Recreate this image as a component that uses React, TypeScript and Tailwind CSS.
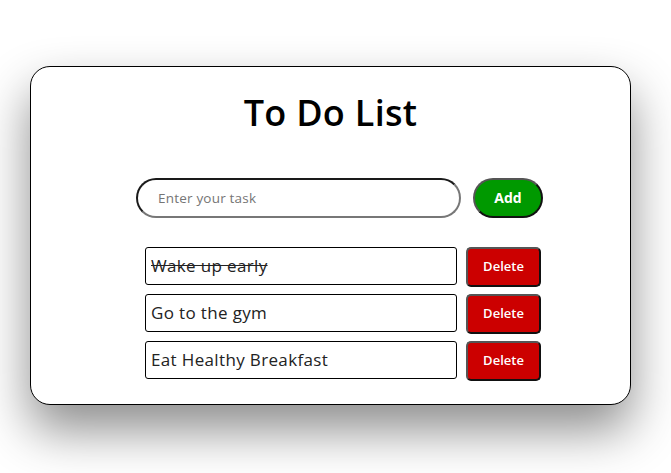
import React from "react";

const tasks = [
  { text: "Wake up early", done: true },
  { text: "Go to the gym", done: false },
  { text: "Eat Healthy Breakfast", done: false },
];

export default function App() {
  return (
    <div className="min-h-[473px] bg-white pt-[66px] pl-[30px] font-['Open_Sans',sans-serif]">
      <div className="w-[601px] h-[339px] rounded-[20px] border border-black bg-white shadow-[0_25px_50px_rgba(0,0,0,0.45)]">
        <h1 className="mt-[22px] text-center text-[36px] leading-[48px] font-semibold tracking-[0.3px] text-black">
          To Do List
        </h1>

        <div className="mt-[41px] ml-[105px] flex items-center gap-[12px]">
          <input
            type="text"
            placeholder="Enter your task"
            className="h-[40px] w-[325px] rounded-full border-2 border-t-[#1a1a1a] border-l-[#1a1a1a] border-b-[#777] border-r-[#777] bg-white pl-[20px] text-[13.5px] tracking-[0.2px] text-black outline-none placeholder:text-[#757575]"
          />
          <button className="-mt-[1px] h-[40px] w-[70px] rounded-full border-2 border-t-[#555] border-l-[#555] border-b-[#111] border-r-[#111] bg-[#009900] text-[14px] font-bold text-white">
            Add
          </button>
        </div>

        <ul className="mt-[29px] ml-[114px] flex flex-col gap-[7px]">
          {tasks.map((task, i) => (
            <li key={i} className="flex items-start gap-[9px]">
              <div
                className={`flex h-[38px] w-[312px] items-center rounded-[3px] border border-black pl-[5px] text-[17px] tracking-[0.35px] text-[#222] ${
                  task.done ? "line-through" : ""
                }`}
              >
                {task.text}
              </div>
              <button className="h-[40px] w-[75px] rounded-[5px] border-2 border-t-[#555] border-l-[#555] border-b-[#111] border-r-[#111] bg-[#cc0000] text-[13px] font-semibold text-white">
                Delete
              </button>
            </li>
          ))}
        </ul>
      </div>
    </div>
  );
}
